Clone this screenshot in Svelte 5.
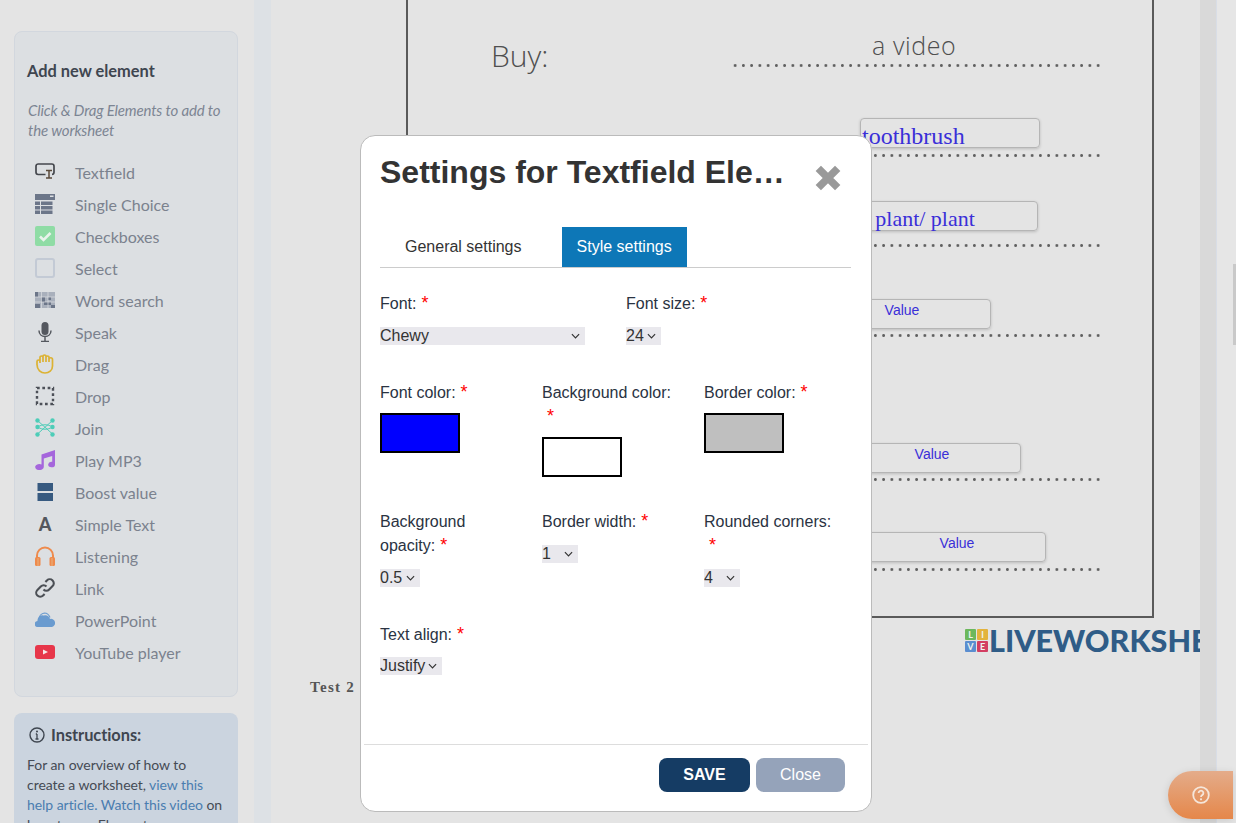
<script>
  const tools = [
    { name: 'Textfield', svg: '<rect x="1" y="2" width="18" height="10.500" rx="2.200" fill="none" stroke="#44474d" stroke-width="1.700"/><rect x="10.500" y="7" width="6.500" height="10" fill="#dcdfe2"/><path d="M11 8.500h6M14 8.500v7.500M11 16h6" stroke="#5a4a3a" stroke-width="1.500" fill="none"/>' },
    { name: 'Single Choice', svg: '<path d="M0 0h20v6H0z" fill="#6c7689"/><path d="M15 1.500h3.500v1.500H15z" fill="#dcdfe2"/><path d="M0 7.500h5v3.500H0zM6 7.500h11.500v3.500H6zM0 12h5v3.500H0zM6 12h11.500v3.500H6zM0 16.500h5V20H0zM6 16.500h11.500V20H6z" fill="#6c7689"/>' },
    { name: 'Checkboxes', svg: '<rect width="20" height="20" rx="2" fill="#8fdca5"/><path d="M5 10.500l3.500 3.500 7-7" fill="none" stroke="#e9f3ec" stroke-width="2.600"/>' },
    { name: 'Select', svg: '<rect x="1" y="1" width="18" height="18" rx="2" fill="none" stroke="#c3cad5" stroke-width="2"/>' },
    { name: 'Word search', svg: '<rect width="20" height="16" y="2" fill="#a9b0bc"/><path d="M0 2h3v5H0zM6 7h4v5H6zM13 7h3v3h-3zM9 12h7v3H9zM0 14h5v4H0zM16 15h4v3h-4z" fill="#6c7689"/><path d="M6.500 2v16M13 2v16M0 7h20M0 12h20" stroke="#dcdfe2" stroke-width=".7"/>' },
    { name: 'Speak', svg: '<rect x="6.500" y="0" width="7" height="13" rx="3.500" fill="#54585f"/><path d="M4 8.500c0 8 12 8 12 0M10 15v4M6 19.500h8" fill="none" stroke="#54585f" stroke-width="1.500"/>' },
    { name: 'Drag', svg: '<path d="M2 11V7.500a1.500 1.500 0 0 1 3 0V9M5 8V3.500a1.500 1.500 0 0 1 3 0V8M8 8V2.500a1.500 1.500 0 0 1 3 0V8M11 8V3.500a1.500 1.500 0 0 1 3 0V8M14 8V5.500a1.500 1.500 0 0 1 3.500 0V12c0 4.500-3.500 7-7.500 7S2 16 2 10.500" fill="none" stroke="#dcb233" stroke-width="1.700"/>' },
    { name: 'Drop', svg: '<rect x="2" y="2" width="16" height="16" fill="none" stroke="#4c5058" stroke-width="2.400" stroke-dasharray="2.700 2.630"/>' },
    { name: 'Join', svg: '<path d="M2.500 2.500l15 13.500M2.500 16L17.500 2.500M2.500 9c5 3 10 3 15 0M2.500 9c5-3 10-3 15 0" stroke="#4dcdb8" stroke-width="1" fill="none"/><g fill="#4dcdb8"><circle cx="2.500" cy="2.500" r="2.200"/><circle cx="17.500" cy="2.500" r="2.200"/><circle cx="2.500" cy="9" r="2.200"/><circle cx="17.500" cy="9" r="2.200"/><circle cx="2.500" cy="16.500" r="2.200"/><circle cx="17.500" cy="16.500" r="2.200"/></g>' },
    { name: 'Play MP3', svg: '<path d="M6.500 4.500L20 0v14.500a3.400 2.800 0 1 1-2.800-2.700V6L8.800 8.600V17a4.300 3 0 1 1-2.300-2.600z" fill="#a566dc"/>' },
    { name: 'Boost value', svg: '<rect x="2.500" y="1" width="15.500" height="8" fill="#375a80"/><rect x="2.500" y="11" width="15.500" height="8" fill="#375a80"/>' },
    { name: 'Simple Text', letter: 'A' },
    { name: 'Listening', svg: '<path d="M2 12V9.500a8 8 0 0 1 16 0V12" fill="none" stroke="#ee8a4c" stroke-width="2"/><rect x="0" y="11" width="5.500" height="9" rx="1.500" fill="#ee8a4c"/><rect x="14.500" y="11" width="5.500" height="9" rx="1.500" fill="#ee8a4c"/><path d="M3 12v8M17 12v8" stroke="#e8b27e" stroke-width="1"/>' },
    { name: 'Link', svg: '<path d="M8.500 11.500a4 4 0 0 0 5.700 0l3.400-3.400a4 4 0 0 0-5.700-5.700l-1.500 1.500M11.500 8.500a4 4 0 0 0-5.700 0l-3.400 3.400a4 4 0 0 0 5.700 5.700l1.500-1.500" fill="none" stroke="#4b4f55" stroke-width="2.100"/>' },
    { name: 'PowerPoint', svg: '<path d="M3 17a3 3 0 0 1-.5-6 5 5 0 0 1 6-5.500A5.500 5.500 0 0 1 15 9a4 4 0 0 1 2 8z" fill="#6a9bcf"/><path d="M4 9.500a6.500 6.500 0 0 1 5.500-6.500c2.500 0 4.500 2 5.500 4.500" fill="none" stroke="#6a9bcf" stroke-width="1.200"/>' },
    { name: 'YouTube player', svg: '<rect y="3" width="20" height="14" rx="3" fill="#e7364a"/><path d="M8 7.500l5 2.500-5 2.500z" fill="#f6e6e8"/>' }
  ];

  const answers = [
    { text: 'toothbrush', left: 589, top: 118, big: true },
    { text: 'a plant/ plant', left: 587, top: 201, big: true, small: true },
    { text: 'Value', left: 540, top: 299 },
    { text: 'Value', left: 570, top: 443 },
    { text: 'Value', left: 595, top: 532 }
  ];
  const dotRows = [64, 154, 244, 334, 478, 568];
</script>

{#snippet chevron()}
  <svg class="chev" viewBox="0 0 10 6"><path d="M1 1l4 4 4-4" fill="none" stroke="#333" stroke-width="1.300"/></svg>
{/snippet}

<div class="page">
  <aside class="sidebar">
    <section class="panel">
      <h2>Add new element</h2>
      <p class="hint">Click &amp; Drag Elements to add to the worksheet</p>
      <ul>
        {#each tools as tool}
          <li>
            {#if tool.letter}
              <span class="icon letter">{tool.letter}</span>
            {:else}
              <svg class="icon" viewBox="0 0 20 20">{@html tool.svg}</svg>
            {/if}
            <span>{tool.name}</span>
          </li>
        {/each}
      </ul>
    </section>
    <section class="help">
      <h3>
        <svg viewBox="0 0 16 16"><circle cx="8" cy="8" r="7" fill="none" stroke="#3f4650" stroke-width="1.400"/><path d="M8 7v5M6.500 12h3M6.800 7h1.200" stroke="#3f4650" stroke-width="1.300" fill="none"/><circle cx="8" cy="4.500" r="1" fill="#3f4650"/></svg>
        Instructions:
      </h3>
      <p>For an overview of how to create a worksheet, <a href="#a">view this help article.</a> <a href="#b">Watch this video</a> on how to use Elements.</p>
    </section>
  </aside>

  <div class="gutter"></div>

  <main class="sheet">
    <div class="frame"></div>
    <span class="buy">Buy:</span>
    <span class="video">a video</span>
    {#each dotRows as y}
      <div class="dots" style="top: {y}px"></div>
    {/each}
    {#each answers as a}
      <div class="answer" class:big={a.big} class:small={a.small} style="left: {a.left}px; top: {a.top}px">{a.text}</div>
    {/each}
    <span class="test">Test 2</span>
    <div class="logo">
      <span class="tiles">
        <i class="l">L</i><i class="i">I</i><i class="v">V</i><i class="e">E</i>
      </span>
      <span class="brand">LIVEWORKSHEETS</span>
    </div>
  </main>

  <div class="strip"></div>
  <div class="rail"><div class="thumb"></div></div>

  <div class="modal">
    <header>
      <h1>Settings for Textfield Element</h1>
      <button class="x" aria-label="Close">
        <svg viewBox="0 0 26 26"><path d="M4 4l18 18M22 4L4 22" stroke="#999" stroke-width="7"/></svg>
      </button>
    </header>

    <nav>
      <span class="tab">General settings</span>
      <span class="tab active">Style settings</span>
    </nav>

    <div class="form">
      <div class="row two">
        <div class="field">
          <label for="f1">Font:<wbr><b>*</b></label>
          <span class="pick w205"><select id="f1"><option>Chewy</option></select>{@render chevron()}</span>
        </div>
        <div class="field">
          <label for="f2">Font size:<wbr><b>*</b></label>
          <span class="pick w35"><select id="f2"><option>24</option></select>{@render chevron()}</span>
        </div>
      </div>

      <div class="row three swatches">
        <div class="field">
          <span class="lab">Font color:<wbr><b>*</b></span>
          <div class="swatch blue"></div>
        </div>
        <div class="field">
          <span class="lab">Background color:<wbr><b>*</b></span>
          <div class="swatch"></div>
        </div>
        <div class="field">
          <span class="lab">Border color:<wbr><b>*</b></span>
          <div class="swatch grey"></div>
        </div>
      </div>

      <div class="row three">
        <div class="field">
          <label for="f3">Background opacity:<wbr><b>*</b></label>
          <span class="pick w40"><select id="f3"><option>0.5</option></select>{@render chevron()}</span>
        </div>
        <div class="field">
          <label for="f4">Border width:<wbr><b>*</b></label>
          <span class="pick w36"><select id="f4"><option>1</option></select>{@render chevron()}</span>
        </div>
        <div class="field">
          <label for="f5">Rounded corners:<wbr><b>*</b></label>
          <span class="pick w36"><select id="f5"><option>4</option></select>{@render chevron()}</span>
        </div>
      </div>

      <div class="row three">
        <div class="field">
          <label for="f6">Text align:<wbr><b>*</b></label>
          <span class="pick w62"><select id="f6"><option>Justify</option></select>{@render chevron()}</span>
        </div>
      </div>
    </div>

    <footer>
      <button class="save">SAVE</button>
      <button class="close">Close</button>
    </footer>
  </div>

  <button class="support" aria-label="Help">
    <svg viewBox="0 0 18 18"><circle cx="9" cy="9" r="7.800" fill="none" stroke="#f5e6da" stroke-width="1.800"/><path d="M6.600 7a2.400 2.400 0 1 1 3.600 2.100c-.8.500-1.200.9-1.200 1.900" fill="none" stroke="#f5e6da" stroke-width="1.800"/><circle cx="9" cy="13.300" r="1.100" fill="#f5e6da"/></svg>
  </button>
</div>

<style>
  :global(body) { margin: 0; background: #e4e4e4; }

  .page {
    position: relative;
    display: flex;
    width: 1236px;
    height: 823px;
    overflow: hidden;
    background: #e4e4e4;
    font-family: "Liberation Sans", Arial, sans-serif;
  }

  .sidebar {
    flex: 0 0 254px;
    box-sizing: border-box;
    padding: 31px 16px 0 14px;
    font-family: Lato, sans-serif;
  }

  .panel {
    box-sizing: border-box;
    height: 666px;
    padding: 29px 12px 0 13px;
    background: #dcdfe2;
    border: 1px solid #d2d7de;
    border-radius: 8px;
  }

  h2 {
    margin: 0 0 0 -1px;
    font-size: 16.400px;
    line-height: 20px;
    font-weight: 700;
    color: #3f4650;
  }

  .hint {
    margin: 19px 0 16px;
    font-size: 15px;
    line-height: 20px;
    letter-spacing: -0.150px;
    font-style: italic;
    color: #7c8593;
  }

  ul { list-style: none; margin: 0; padding: 0; }

  li {
    display: flex;
    align-items: center;
    height: 32px;
    padding-left: 7px;
    font-size: 16px;
    color: #7b828e;
  }

  .icon {
    flex: 0 0 20px;
    width: 20px;
    height: 20px;
    margin-right: 20px;
  }

  .letter {
    font-size: 18px;
    font-weight: 900;
    line-height: 20px;
    text-align: center;
    color: #54575d;
  }

  .help {
    box-sizing: border-box;
    height: 140px;
    margin-top: 16px;
    padding: 12px 13px;
    background: #cbd4df;
    border-radius: 8px;
    color: #454b55;
    font-size: 14px;
    line-height: 20px;
    letter-spacing: -0.050px;
  }

  .help h3 {
    display: flex;
    align-items: center;
    gap: 6px;
    margin: 0 0 10px;
    padding-left: 2px;
    font-size: 16.400px;
    font-weight: 700;
    color: #3f4650;
  }

  .help h3 svg { width: 16px; height: 16px; }
  .help p { margin: 0; }
  .help a { color: #4a7db0; text-decoration: none; }

  .gutter { flex: 0 0 17px; background: #dde1e5; }

  .sheet {
    position: relative;
    flex: 0 0 929px;
    overflow: hidden;
  }

  .frame {
    position: absolute;
    left: 135px;
    top: -10px;
    width: 744px;
    height: 624px;
    border: 2px solid #5a5a5a;
  }

  .buy, .video {
    position: absolute;
    font-family: "Open Sans", sans-serif;
    font-weight: 300;
    color: #4f4f4f;
  }

  .buy { left: 220px; top: 36px; font-size: 30px; line-height: 40px; }
  .video { left: 601px; top: 27px; font-size: 25px; line-height: 36px; letter-spacing: 0.600px; }

  .dots {
    position: absolute;
    left: 460px;
    width: 372px;
    height: 3px;
    background-image: radial-gradient(circle at center, #606060 0 1.200px, transparent 1.600px);
    background-size: 8.260px 3px;
  }

  .answer {
    position: absolute;
    box-sizing: border-box;
    width: 180px;
    height: 30px;
    padding: 2px 0 0 2px;
    border: 1px solid #b5b5b5;
    border-radius: 4px;
    box-shadow: 0 1px 3px rgba(0, 0, 0, 0.18);
    font-size: 14px;
    line-height: 16px;
    text-align: center;
    color: #3a2fd8;
  }

  .answer.big {
    padding: 3px 0 0 1px;
    font-family: "Liberation Serif", serif;
    font-size: 24px;
    line-height: 28px;
    text-align: left;
    white-space: nowrap;
  }

  .answer.big.small { font-size: 22px; }

  .test {
    position: absolute;
    left: 39px;
    top: 678px;
    font-family: "Liberation Serif", serif;
    font-size: 15px;
    line-height: 18px;
    font-weight: 700;
    letter-spacing: 1.300px;
    color: #555;
  }

  .logo {
    position: absolute;
    left: 694px;
    top: 627px;
    display: flex;
    align-items: center;
    gap: 1px;
    white-space: nowrap;
  }

  .tiles {
    display: grid;
    grid-template-columns: 11px 11px;
    grid-auto-rows: 11px;
    gap: 1px;
  }

  .tiles i {
    font: 700 9px/11px Lato, sans-serif;
    text-align: center;
    color: #eef3ee;
    border-radius: 1px;
  }

  .tiles .l { background: #6cb85c; }
  .tiles .i { background: #e3b33c; }
  .tiles .v { background: #5b8ed0; }
  .tiles .e { background: #d33e62; }

  .brand {
    font-family: Lato, sans-serif;
    font-size: 30.500px;
    line-height: 26px;
    font-weight: 900;
    color: #2f5c87;
  }

  .strip { flex: 0 0 17px; background: #d9d9d9; border-right: 1px solid #d8dde6; box-sizing: border-box; }

  .rail {
    position: relative;
    flex: 1;
    background: #e6e6e6;
  }

  .thumb {
    position: absolute;
    right: 0;
    top: 264px;
    width: 3px;
    height: 81px;
    background: #c9c9c9;
  }

  .modal {
    position: absolute;
    left: 360px;
    top: 135px;
    box-sizing: border-box;
    width: 512px;
    height: 677px;
    display: flex;
    flex-direction: column;
    background: #fff;
    border: 1px solid #bbb;
    border-radius: 15px;
    color: #2a3342;
  }

  header {
    display: flex;
    justify-content: space-between;
    padding: 15px 29px 0 19px;
    height: 76px;
    box-sizing: content-box;
  }

  h1 {
    width: 405px;
    margin: 0;
    overflow: hidden;
    font-size: 32px;
    line-height: 42px;
    font-weight: 700;
    color: #333;
    white-space: nowrap;
    text-overflow: ellipsis;
  }

  .x {
    width: 28px;
    height: 28px;
    margin-top: 13px;
    padding: 0;
    background: none;
    border: 0;
  }

  .x svg { display: block; width: 28px; height: 28px; }

  nav {
    display: flex;
    height: 40px;
    margin: 0 20px 0 19px;
    border-bottom: 1px solid #ccc;
  }

  .tab {
    padding: 0 15px;
    margin-left: 10px;
    margin-right: 25px;
    font-size: 16px;
    line-height: 40px;
    color: #333;
  }

  .tab.active {
    margin: 0;
    background: #0d77b7;
    color: #fff;
  }

  .form {
    flex: 1;
    padding: 24px 19px 0;
  }

  .row { display: grid; margin-bottom: 36px; }
  .row.two { grid-template-columns: 246px 1fr; }
  .row.three { grid-template-columns: 135px 135px 135px; column-gap: 27px; }
  .row.swatches { margin-bottom: 33px; }

  .field { display: flex; flex-direction: column; align-items: flex-start; }

  label, .lab {
    font-size: 16px;
    line-height: 24px;
    color: #2a3342;
  }

  label b, .lab b {
    margin-left: 5px;
    font-size: 18px;
    line-height: 0;
    font-weight: 400;
    color: #f00;
  }

  .pick {
    position: relative;
    display: block;
    height: 18px;
    margin-top: 11px;
    background: #e9e8ed;
  }

  .row.three:last-child .pick { margin-top: 10px; }

  select {
    display: block;
    width: 100%;
    height: 18px;
    padding: 0;
    border: 0;
    border-radius: 0;
    appearance: none;
    background: transparent;
    font: 16px/18px "Liberation Sans", Arial, sans-serif;
    color: #333;
  }

  .chev {
    position: absolute;
    right: 5px;
    top: 6px;
    width: 9px;
    height: 6px;
    pointer-events: none;
  }

  .w205 { width: 205px; }
  .w35 { width: 35px; }
  .w40 { width: 40px; }
  .w36 { width: 36px; }
  .w62 { width: 62px; }

  .swatch {
    box-sizing: border-box;
    width: 80px;
    height: 40px;
    margin-top: 8px;
    border: 2px solid #000;
    background: #fff;
  }

  .swatch.blue { background: #00f; }
  .swatch.grey { background: #bfbfbf; }

  footer {
    display: flex;
    justify-content: flex-end;
    gap: 6px;
    height: 67px;
    box-sizing: border-box;
    margin-left: 3px;
    margin-right: 3px;
    padding: 13px 23px 0 0;
    border-top: 1px solid #ddd;
  }

  footer button {
    height: 34px;
    border: 0;
    border-radius: 8px;
    font: 16px "Liberation Sans", Arial, sans-serif;
    color: #fff;
  }

  .save { width: 91px; background: #153c64; font-weight: 700; }
  .close { width: 89px; background: #95a3ba; }

  .support {
    position: absolute;
    left: 1168px;
    top: 771px;
    width: 65px;
    height: 48px;
    padding: 0 0 0 1px;
    border: 0;
    border-radius: 24px 0 0 24px;
    background: linear-gradient(180deg, #e4ac8a, #e5874a);
    box-shadow: 0 2px 8px rgba(0, 0, 0, 0.12);
    text-align: left;
  }

  .support svg {
    display: block;
    width: 18px;
    height: 18px;
    margin-left: 23px;
  }
</style>
